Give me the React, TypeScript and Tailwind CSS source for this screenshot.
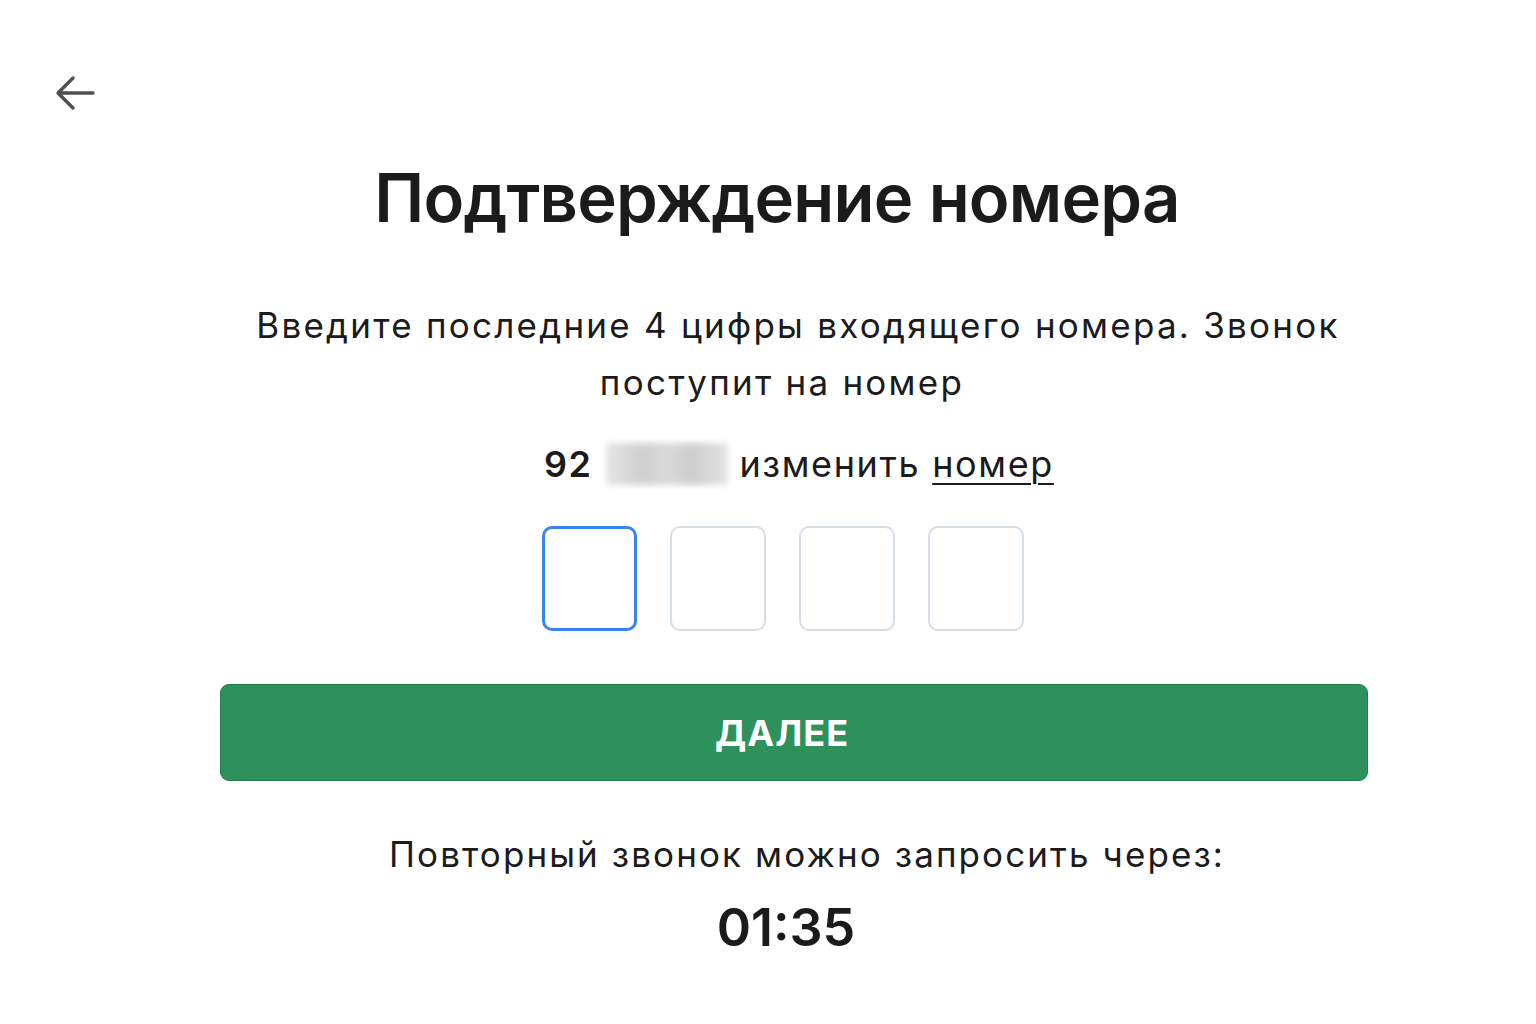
import { useState } from "react"

const ArrowBack = () => (
  <svg width="42" height="38" viewBox="0 0 42 38" fill="none">
    <path
      d="M3 18H38M18 3L3 18L18 33"
      stroke="#505050"
      strokeWidth="3.4"
      strokeLinecap="round"
      strokeLinejoin="round"
    />
  </svg>
)

export default function App() {
  const [code] = useState(["", "", "", ""])

  return (
    <div className="min-h-screen bg-white font-['Inter',sans-serif] text-[#1b1b1b]">
      <div className="pl-[55px] pt-[75px]">
        <button className="block">
          <ArrowBack />
        </button>
      </div>

      <div className="ml-[220px] flex w-[1148px] flex-col items-center">
        <h1 className="mr-[34px] mt-[51px] text-[67px] font-semibold leading-none tracking-[-0.012em]">
          Подтверждение номера
        </h1>

        <p className="ml-[8px] mt-[66px] text-center text-[35px] leading-[57px] tracking-[0.064em]">
          Введите последние 4 цифры входящего номера. Звонок
          <br />
          <span className="mr-[32px] inline-block">поступит на номер</span>
        </p>

        <div className="ml-[10px] mt-[29px] flex items-center text-[36px] leading-[48px]">
          <span className="font-semibold tracking-[0.04em]">92</span>
          <span className="ml-[14px] h-[42px] w-[122px] rounded-sm bg-[linear-gradient(90deg,#e4e4e4,#cfcfcf_30%,#d9d9d9_50%,#cdcdcd_70%,#e2e2e2)] blur-[3px]" />
          <span className="ml-[11px] tracking-[0.045em]">изменить</span>
          <span className="ml-[12px] underline decoration-2 underline-offset-[6px] tracking-[0.045em]">
            номер
          </span>
        </div>

        <div className="mr-[22px] mt-[38px] flex gap-[33px]">
          {code.map((v, i) => (
            <input
              key={i}
              value={v}
              readOnly
              maxLength={1}
              className={
                i === 0
                  ? "h-[105px] w-[95px] rounded-[10px] border-[3px] border-[#3b82f6] text-center text-[40px] outline-none"
                  : "h-[105px] w-[96px] rounded-[10px] border-2 border-[#d6dee6] text-center text-[40px] outline-none"
              }
            />
          ))}
        </div>

        <button className="mt-[53px] h-[97px] w-full rounded-[9px] border border-[#1f7d45] bg-[#2e915c] pr-[24px] text-[36px] font-bold tracking-[0.03em] text-white">
          ДАЛЕЕ
        </button>

        <p className="ml-[26px] mt-[51px] text-[35px] leading-[44px] tracking-[0.06em]">
          Повторный звонок можно запросить через:
        </p>

        <p className="mr-[16px] mt-[26px] text-[52px] font-semibold leading-none">01:35</p>
      </div>
    </div>
  )
}
